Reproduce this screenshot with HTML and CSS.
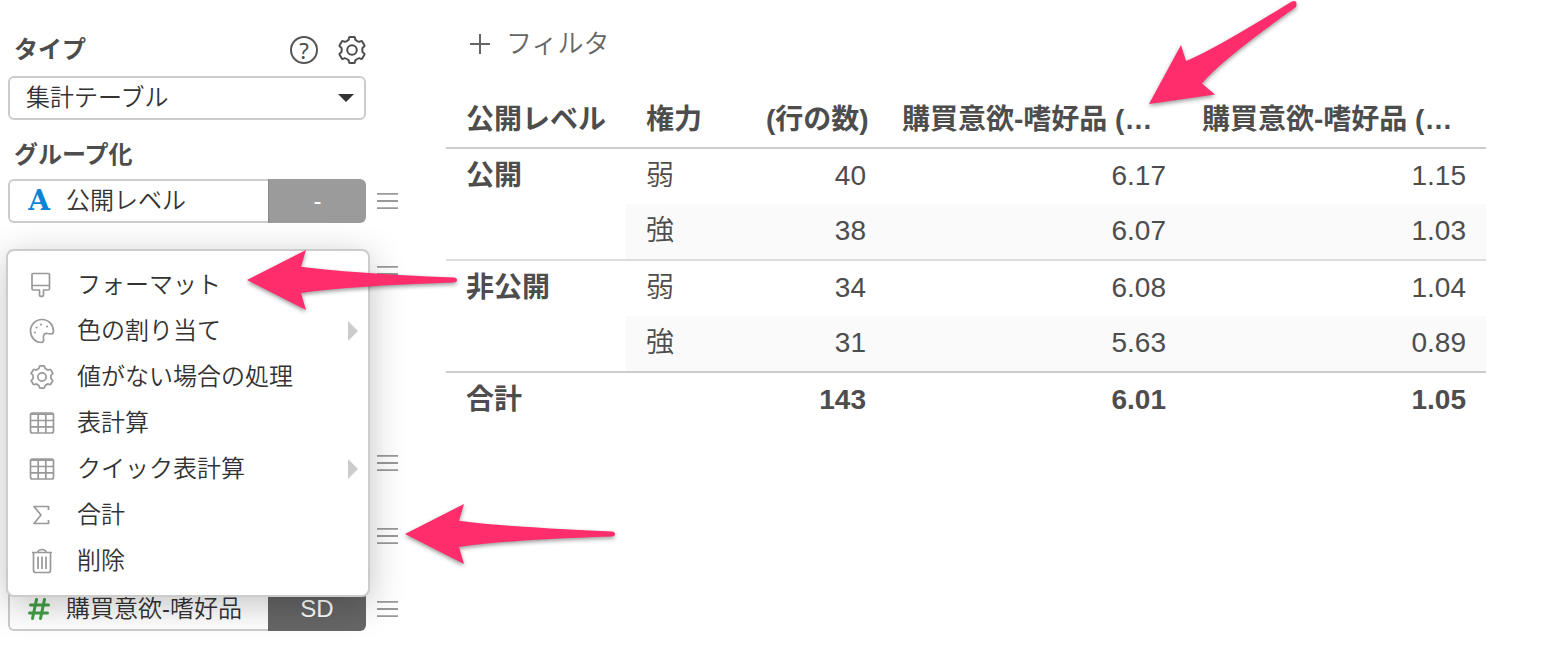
FILE: index.html
```html
<!DOCTYPE html>
<html lang="ja">
<head>
<meta charset="utf-8">
<title>集計テーブル</title>
<link rel="stylesheet" href="styles.css">
</head>
<body>
<svg class="defs" aria-hidden="true">
  <symbol id="gear" viewBox="-14 -14 28 28">
    <path d="M-2-13H2Q3-13 3-12L3.400-10.300Q5-8.700 7.200-8.100L8.900-8.800Q9.800-9.200 10.300-8.200L12.400-4.700Q12.800-3.900 12-3.300L10.600-2.200Q10 0 10.600 2.200L12 3.300Q12.800 3.900 12.400 4.700L10.300 8.200Q9.800 9.200 8.900 8.800L7.200 8.100Q5 8.700 3.400 10.300L3 12Q3 13 2 13H-2Q-3 13-3 12L-3.400 10.300Q-5 8.700-7.200 8.100L-8.900 8.800Q-9.800 9.200-10.300 8.200L-12.400 4.700Q-12.800 3.900-12 3.300L-10.600 2.200Q-10 0-10.600-2.200L-12-3.300Q-12.800-3.900-12.400-4.700L-10.300-8.200Q-9.800-9.200-8.900-8.800L-7.200-8.100Q-5-8.700-3.400-10.300L-3-12Q-3-13-2-13Z"/>
    <circle r="4.8"/>
  </symbol>
  <symbol id="grid" viewBox="0 0 26 26">
    <rect x="1.5" y="3" width="23" height="20" rx="2"/>
    <path d="M2 4.200H24M2 10.500H24M2 16.800H24M9.200 4V23M16.800 4V23"/>
  </symbol>
  <symbol id="burger" viewBox="0 0 22 18">
    <path d="M0 1.500H22M0 9H22M0 16.500H22"/>
  </symbol>
  <symbol id="arrow" viewBox="0 0 212 64">
    <path d="M0 31L59 1L54 17.700Q100 24 207 28.500Q210 29 210 31T207 33.500Q100 37 54 44L59 61Z"/>
  </symbol>
</svg>

<div class="page">
  <aside class="sidebar">
    <header class="head">
      <label class="label" for="chart-type">タイプ</label>
      <button class="help" type="button">?</button>
      <button class="icon-button" type="button" aria-label="設定"><svg class="icon-lg"><use href="#gear"/></svg></button>
    </header>
    <div class="select-wrap">
      <select class="select" id="chart-type"><option>集計テーブル</option></select>
      <svg class="caret" viewBox="0 0 16 8"><path d="M0 0H16L8 8Z"/></svg>
    </div>

    <h2 class="label group-label">グループ化</h2>
    <div class="rows">
      <div class="row">
        <div class="field">
          <button class="field-name" type="button"><span class="type-text">A</span>公開レベル</button>
          <button class="badge badge-light" type="button">-</button>
        </div>
        <button class="burger" type="button" aria-label="メニュー"><svg><use href="#burger"/></svg></button>
      </div>
      <div class="row">
        <div class="field"></div>
        <button class="burger" type="button" aria-label="メニュー"><svg><use href="#burger"/></svg></button>
      </div>
    </div>

    <div class="rows rows-values">
      <div class="row">
        <div class="field"></div>
        <button class="burger" type="button" aria-label="メニュー"><svg><use href="#burger"/></svg></button>
      </div>
      <div class="row">
        <div class="field"></div>
        <button class="burger" type="button" aria-label="メニュー"><svg><use href="#burger"/></svg></button>
      </div>
      <div class="row">
        <div class="field">
          <button class="field-name" type="button"><svg class="type-number" viewBox="0 0 22 22"><path d="M8.500 1.500L4.500 20.500M16.500 1.500L12.500 20.500M2.500 7H20.500M1.500 15H19.500"/></svg>購買意欲-嗜好品</button>
          <button class="badge badge-dark" type="button">SD</button>
        </div>
        <button class="burger" type="button" aria-label="メニュー"><svg><use href="#burger"/></svg></button>
      </div>
    </div>

    <div class="menu" role="menu">
      <button class="item" type="button" role="menuitem">
        <svg class="icon" viewBox="0 0 26 26"><path d="M4.500 1.500H19.500Q20.500 1.500 20.500 2.500V16.500Q20.500 18 19 18H14.500V22.500Q14.500 24.500 12.500 24.500T10.500 22.500V18H4.500Q3 18 3 16.500V2.500Q3 1.500 4.500 1.500ZM3 13.500H20.500"/></svg>フォーマット</button>
      <button class="item" type="button" role="menuitem">
        <svg class="icon" viewBox="0 0 26 26"><path d="M13 1.500C6.500 1.500 1.500 6.600 1.500 13C1.500 19.500 6.500 24.500 12 24.500C14.500 24.500 15 22.500 14.500 20.500C13.700 17 15.500 14.800 18.500 15.500L22 16C23.800 16 24.500 14.800 24.500 13C24.300 6.500 19.500 1.500 13 1.500Z"/><path class="dots" d="M6 14.500h.1M7.500 9.500h.1M12 6.500h.1M18 8.500h.1"/></svg>色の割り当て<svg class="more" viewBox="0 0 10 20"><path d="M0 0L10 10L0 20Z"/></svg></button>
      <button class="item" type="button" role="menuitem"><svg class="icon icon-gear"><use href="#gear"/></svg>値がない場合の処理</button>
      <button class="item" type="button" role="menuitem"><svg class="icon"><use href="#grid"/></svg>表計算</button>
      <button class="item" type="button" role="menuitem"><svg class="icon"><use href="#grid"/></svg>クイック表計算<svg class="more" viewBox="0 0 10 20"><path d="M0 0L10 10L0 20Z"/></svg></button>
      <button class="item" type="button" role="menuitem">
        <svg class="icon" viewBox="0 0 26 26"><path d="M19.500 8V4.500H5L12 13L5 21.500H19.500V18"/></svg>合計</button>
      <button class="item" type="button" role="menuitem">
        <svg class="icon" viewBox="0 0 26 26"><path d="M3 4.500H23M8.500 4.500Q9.500 1.500 13 1.500T17.500 4.500M4.500 5V22Q4.500 24.500 6.500 24.500H19.500Q21.500 24.500 21.500 22V5M9 8.500V21M13 8.500V21M17 8.500V21"/></svg>削除</button>
    </div>
  </aside>

  <main class="main">
    <button class="filter" type="button"><svg class="plus" viewBox="0 0 20 20"><path d="M10 0V20M0 10H20"/></svg>フィルタ</button>
    <table class="table">
      <colgroup><col class="c-level"><col class="c-power"><col class="c-count"><col><col></colgroup>
      <thead>
        <tr><th>公開レベル</th><th>権力</th><th class="num">(行の数)</th><th class="cut">購買意欲-嗜好品 (…</th><th class="cut">購買意欲-嗜好品 (…</th></tr>
      </thead>
      <tbody>
        <tr><th rowspan="2">公開</th><td>弱</td><td class="num">40</td><td class="num">6.17</td><td class="num">1.15</td></tr>
        <tr class="striped"><td>強</td><td class="num">38</td><td class="num">6.07</td><td class="num">1.03</td></tr>
      </tbody>
      <tbody>
        <tr><th rowspan="2">非公開</th><td>弱</td><td class="num">34</td><td class="num">6.08</td><td class="num">1.04</td></tr>
        <tr class="striped"><td>強</td><td class="num">31</td><td class="num">5.63</td><td class="num">0.89</td></tr>
      </tbody>
      <tfoot>
        <tr><th colspan="2">合計</th><td class="num">143</td><td class="num">6.01</td><td class="num">1.05</td></tr>
      </tfoot>
    </table>
  </main>

  <svg class="arrow arrow-format"><use href="#arrow"/></svg>
  <svg class="arrow arrow-row"><use href="#arrow"/></svg>
  <svg class="arrow arrow-column" viewBox="0 0 152 108"><path d="M1 104L33 45L38 61Q62 52 143 2Q147 0 148 2T148 7Q72 61 54 83.500L67 94.500Z"/></svg>
</div>
</body>
</html>
```

FILE: styles.css
```css
* { box-sizing: border-box; }

body {
  margin: 0;
  background: #fff;
  color: #333;
  font-family: "Liberation Sans", "Noto Sans CJK JP", sans-serif;
  font-size: 24px;
  line-height: 32px;
}

button, select {
  margin: 0;
  padding: 0;
  border: 0;
  background: none;
  color: inherit;
  font: inherit;
  text-align: left;
}

svg {
  display: block;
  flex: none;
  fill: none;
  stroke: currentColor;
  stroke-width: 2;
  stroke-linejoin: round;
}

.defs {
  position: absolute;
  width: 0;
  height: 0;
}

.page {
  position: relative;
  display: flex;
}

/* Sidebar */
.sidebar {
  position: relative;
  flex: none;
  width: 446px;
  padding: 32px 48px 20px 8px;
}

.head {
  display: flex;
  align-items: center;
  gap: 20px;
  margin-right: 32px;
  height: 36px;
}

.label {
  flex: 1;
  margin: 0;
  padding-left: 6px;
  color: #4d4d4d;
  font-size: 24px;
  font-weight: 700;
  line-height: 32px;
}

.help {
  width: 28px;
  height: 28px;
  border: 2px solid #555;
  border-radius: 50%;
  color: #4d4d4d;
  font-family: "Noto Sans", sans-serif;
  font-size: 22px;
  line-height: 24px;
  text-align: center;
}

.icon-lg {
  width: 28px;
  height: 28px;
  color: #4d4d4d;
}

.select-wrap {
  position: relative;
  margin: 8px 32px 0 0;
}

.select {
  width: 100%;
  height: 44px;
  padding: 0 40px 0 16px;
  border: 2px solid #ccc;
  border-radius: 6px;
  appearance: none;
  font-weight: 350;
}

.caret {
  position: absolute;
  top: 18px;
  right: 12px;
  width: 16px;
  height: 8px;
  fill: #333;
  stroke: none;
  pointer-events: none;
}

.group-label { margin: 19px 0 8px; }

.rows {
  display: flex;
  flex-direction: column;
  gap: 29px;
}

.rows-values { margin-top: 145px; }

.row {
  display: flex;
  align-items: center;
  gap: 11px;
}

.field {
  display: flex;
  flex: 1;
  height: 44px;
}

.field-name {
  display: flex;
  flex: 1;
  align-items: center;
  gap: 16px;
  padding-left: 18px;
  border: 2px solid #ccc;
  border-right: 0;
  border-radius: 6px 0 0 6px;
  font-weight: 350;
  white-space: nowrap;
}

.type-text {
  display: flex;
  justify-content: center;
  width: 22px;
  color: #0b84d8;
  font-family: "DejaVu Serif", serif;
  font-size: 28px;
  font-weight: 700;
}

.type-number {
  width: 22px;
  height: 22px;
  color: #43a047;
  stroke-width: 3;
  stroke-linecap: round;
}

.badge {
  width: 98px;
  border-radius: 0 6px 6px 0;
  color: #fff;
  text-align: center;
}

.badge-light {
  border-left: 1px solid #888;
  background: #9b9b9b;
}

.badge-dark { background: #666; }

.burger svg {
  width: 21px;
  height: 18px;
  color: #999;
}

/* Context menu */
.menu {
  position: absolute;
  top: 249px;
  left: 6px;
  width: 364px;
  padding: 11px 10px 11px 21px;
  border: 2px solid #ccc;
  border-radius: 8px;
  background: #fff;
  box-shadow: 0 8px 36px rgba(0, 0, 0, .24);
}

.item {
  display: flex;
  align-items: center;
  width: 100%;
  height: 46px;
  font-weight: 350;
}

.icon {
  width: 26px;
  height: 26px;
  margin-right: 22px;
  color: #999;
  stroke-width: 1.700;
}

.icon-gear {
  padding: 1px;
  stroke-width: 2;
}

.dots {
  stroke-width: 2;
  stroke-linecap: round;
}

.more {
  width: 10px;
  height: 20px;
  margin-left: auto;
  fill: #ccc;
  stroke: none;
}

/* Table area */
.main {
  flex: 1;
  min-width: 0;
  padding: 26px 58px 20px 0;
  color: #4d4d4d;
}

.filter {
  display: flex;
  align-items: center;
  gap: 16px;
  height: 36px;
  margin-left: 24px;
  color: #666;
  font-size: 26px;
  font-weight: 350;
}

.plus {
  width: 20px;
  height: 20px;
}

.table {
  width: 100%;
  margin-top: 30px;
  border-collapse: separate;
  border-spacing: 0;
  table-layout: fixed;
  font-size: 28px;
}

.c-level { width: 180px; }
.c-power { width: 120px; }
.c-count { width: 140px; }

th, td {
  padding: 11px 20px 12px;
  text-align: left;
  vertical-align: top;
  white-space: nowrap;
}

td { font-weight: 350; }

th.num, td.num { text-align: right; }

thead th {
  padding-top: 12px;
  padding-bottom: 11px;
  border-bottom: 2px solid #ccc;
}

thead .cut {
  overflow: hidden;
  padding-right: 16px;
  padding-left: 16px;
}

tbody + tbody th, tbody + tbody tr:first-child td { border-top: 2px solid #ddd; }

tfoot th, tfoot td {
  border-top: 2px solid #ccc;
  font-weight: 700;
}

.striped td { background: #fafafa; }

/* Annotation arrows */
.arrow {
  position: absolute;
  fill: #ff2d6b;
  stroke: none;
  filter: drop-shadow(0 2px 2px rgba(0, 0, 0, .4));
}

.arrow-format, .arrow-row {
  width: 212px;
  height: 64px;
}

.arrow-format { top: 249px; left: 247px; }
.arrow-row { top: 503px; left: 405px; }

.arrow-column {
  top: 0;
  left: 1148px;
  width: 152px;
  height: 108px;
}
```
